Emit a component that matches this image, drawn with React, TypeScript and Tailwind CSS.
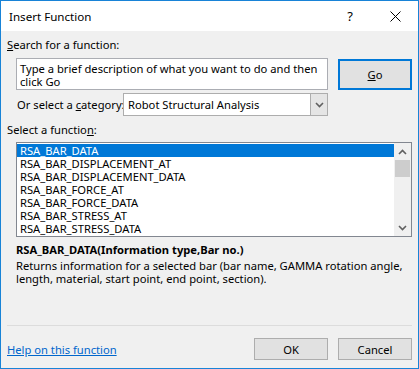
import React from "react";

const font = { fontFamily: '"Noto Sans", "Open Sans", sans-serif' };

const functions = [
  "RSA_BAR_DATA",
  "RSA_BAR_DISPLACEMENT_AT",
  "RSA_BAR_DISPLACEMENT_DATA",
  "RSA_BAR_FORCE_AT",
  "RSA_BAR_FORCE_DATA",
  "RSA_BAR_STRESS_AT",
  "RSA_BAR_STRESS_DATA",
];

function Chevron({ up = false }: { up?: boolean }) {
  return (
    <svg width="9" height="6" viewBox="0 0 9 6">
      <path
        d={up ? "M1 5 L4.5 1.5 L8 5" : "M1 1 L4.5 4.5 L8 1"}
        stroke="#606060"
        strokeWidth="1.6"
        fill="none"
      />
    </svg>
  );
}

export default function App() {
  return (
    <div
      className="flex h-[369px] w-[419px] flex-col border border-[#1883d7] bg-[#f0f0f0] text-[11.2px] leading-[13px] text-black"
      style={font}
    >
      {/* Title bar */}
      <div className="flex h-[30px] items-center bg-white pl-[8px]">
        <span className="flex-1 text-[11.6px]">Insert Function</span>
        <span className="mr-[37px] text-[13px]">?</span>
        <svg width="11" height="11" viewBox="0 0 11 11" className="mr-[17px]">
          <path d="M0.5 0.5 L10.5 10.5 M10.5 0.5 L0.5 10.5" stroke="#000" strokeWidth="1" />
        </svg>
      </div>

      <div className="flex flex-1 flex-col px-[6px]">
        <div className="mt-[7px] leading-[14px]">
          <span className="underline">S</span>earch for a function:
        </div>

        {/* Search row */}
        <div className="mt-[6px] flex items-start">
          <div className="ml-[9px] h-[32px] w-[312px] border border-[#abadb3] bg-white px-[3px] pt-[3px] leading-[13px]">
            Type a brief description of what you want to do and then click Go
          </div>
          <button className="ml-[10px] mt-[1px] flex h-[31px] w-[74px] items-center justify-center border-2 border-[#0078d7] bg-[#e1e1e1]">
            <span>
              <span className="underline">G</span>o
            </span>
          </button>
        </div>

        {/* Category row */}
        <div className="mt-[3px] flex items-center">
          <span className="ml-[10px] w-[106px] whitespace-nowrap">
            Or select a <span className="underline">c</span>ategory:
          </span>
          <div className="flex h-[23px] w-[205px] border border-[#adadad] bg-white">
            <span className="flex-1 pl-[4px] pt-[4px]">Robot Structural Analysis</span>
            <span className="flex w-[17px] items-center justify-center border-l border-[#adadad] bg-[#e5e5e5]">
              <Chevron />
            </span>
          </div>
        </div>

        <div className="mt-[7px] leading-[14px]">
          Select a functio<span className="underline">n</span>:
        </div>

        {/* Function list */}
        <div className="ml-[9px] mt-[5px] flex h-[95px] w-[396px] border border-[#828790] bg-white">
          <div className="flex-1 pt-[1px]">
            {functions.map((fn, i) => (
              <div
                key={fn}
                className={
                  "h-[13px] pl-[3px] leading-[13px] " +
                  (i === 0 ? "bg-[#0078d7] text-white" : "")
                }
              >
                {fn}
              </div>
            ))}
          </div>
          <div className="flex w-[17px] flex-col items-center bg-[#f0f0f0]">
            <div className="flex h-[17px] items-center justify-center">
              <Chevron up />
            </div>
            <div className="h-[17px] w-[15px] bg-[#cdcdcd]" />
            <div className="flex-1" />
            <div className="flex h-[17px] items-center justify-center">
              <Chevron />
            </div>
          </div>
        </div>

        {/* Function description */}
        <div className="ml-[9px] mt-[6px] font-bold leading-[14px]">
          RSA_BAR_DATA(Information type,Bar no.)
        </div>
        <div className="ml-[9px] mt-[2px] leading-[13px]">
          Returns information for a selected bar (bar name, GAMMA rotation angle,
          length, material, start point, end point, section).
        </div>

        <div className="flex-1" />
        <div className="h-px bg-[#dcdcdc]" />

        {/* Footer */}
        <div className="mb-[8px] mt-[12px] flex items-center">
          <span className="flex-1 text-[#0066cc] underline">Help on this function</span>
          <button className="h-[22px] w-[74px] border border-[#adadad] bg-[#e1e1e1]">OK</button>
          <button className="ml-[10px] h-[22px] w-[74px] border border-[#adadad] bg-[#e1e1e1]">
            Cancel
          </button>
        </div>
      </div>
    </div>
  );
}
